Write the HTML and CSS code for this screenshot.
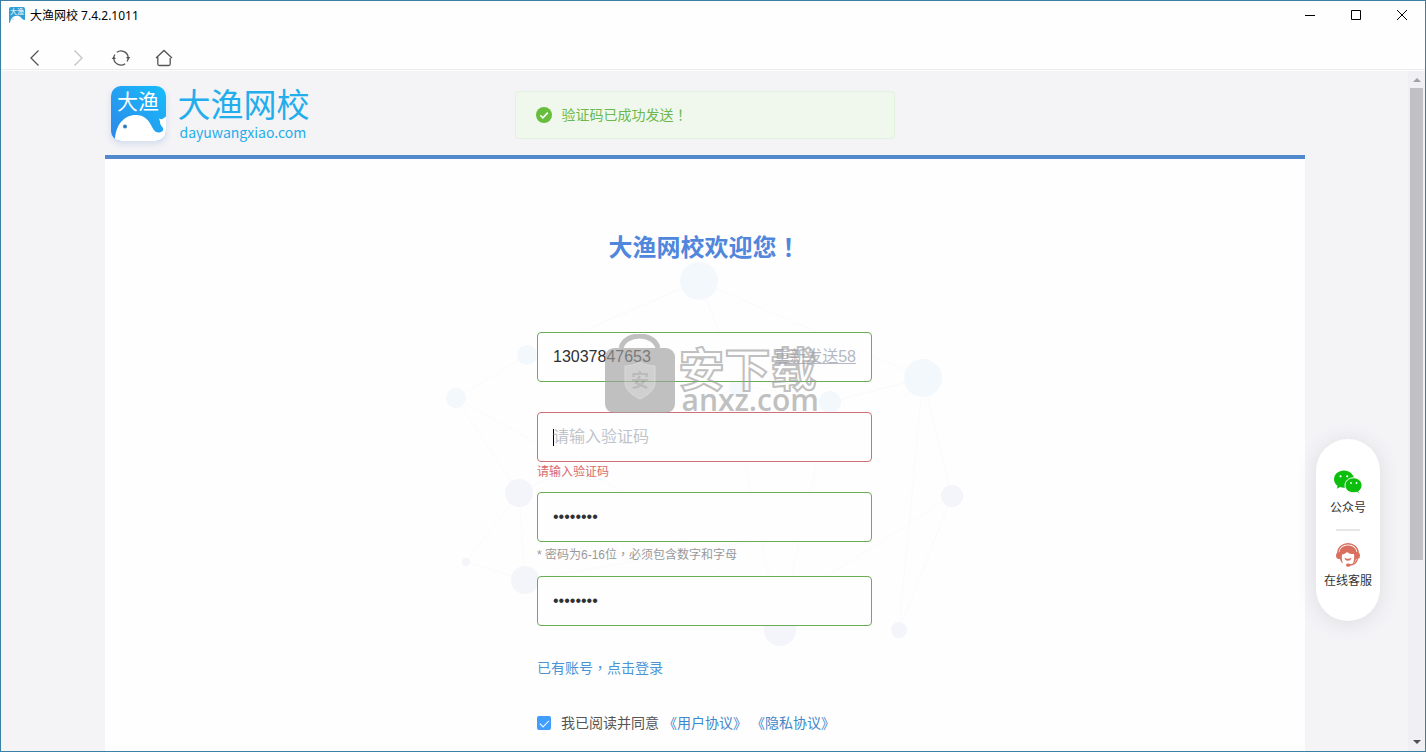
FILE: index.html
```html
<!DOCTYPE html>
<html lang="zh-CN">
<head>
<meta charset="utf-8">
<title>大渔网校 7.4.2.1011</title>
<link rel="stylesheet" href="styles.css">
</head>
<body>
<div class="window">
  <header class="titlebar">
    <svg class="app-icon" viewBox="0 0 16 16" aria-hidden="true">
      <path d="M2 0h12a2 2 0 0 1 2 2v11c-2 0-3-1-4-2.500C10 8 5 8.500 3 11c-1 1-1.500 3-2 4.500L0 16V2a2 2 0 0 1 2-2z" fill="#2f9fd6"/>
      <text x="1" y="7" class="app-icon-text">大渔</text>
      <circle cx="4" cy="12" r=".6" fill="#2f9fd6"/>
    </svg>
    <span class="titlebar-text">大渔网校 7.4.2.1011</span>
    <div class="window-controls">
      <button class="window-button" aria-label="最小化"><svg viewBox="0 0 12 12"><path d="M1 6.500h10"/></svg></button>
      <button class="window-button" aria-label="最大化"><svg viewBox="0 0 12 12"><path d="M1.500 1.500h9v9h-9z"/></svg></button>
      <button class="window-button" aria-label="关闭"><svg viewBox="0 0 12 12"><path d="M1 1l10 10M11 1L1 11"/></svg></button>
    </div>
  </header>

  <nav class="toolbar">
    <button class="tool" aria-label="后退"><svg viewBox="0 0 18 18"><path d="M12.500 1.500L5 9l7.500 7.500"/></svg></button>
    <button class="tool tool-off" aria-label="前进" disabled><svg viewBox="0 0 18 18"><path d="M5.500 1.500L13 9l-7.500 7.500"/></svg></button>
    <button class="tool" aria-label="刷新"><svg viewBox="0 0 18 18"><path d="M4.800 3.300A7.200 7.200 0 0 1 16.200 8.500M13.200 14.700A7.200 7.200 0 0 1 1.800 9.500M1.800 8.500a7 7 0 0 1 1.200-3M16.200 9.500a7 7 0 0 1-1.200 3"/><path class="solid" d="M14 8h4.400l-2.200 2.800zM-.4 10H4L1.800 7.200z"/></svg></button>
    <button class="tool" aria-label="主页"><svg viewBox="0 0 18 18"><path d="M1 9l8-7.500L17 9M2.800 8v7a1.500 1.500 0 0 0 1.500 1.500h9.400a1.500 1.500 0 0 0 1.500-1.500V9"/></svg></button>
  </nav>

  <div class="viewport">
    <main class="page">
      <div class="brand-bar">
        <svg class="brand-mark" viewBox="0 0 55 55" aria-hidden="true">
          <defs>
            <linearGradient id="sky" x1="1" y1="0" x2="0" y2="1"><stop offset="0" stop-color="#16bdfb"/><stop offset="1" stop-color="#2f86e8"/></linearGradient>
            <clipPath id="tile"><rect width="55" height="55" rx="10"/></clipPath>
          </defs>
          <g clip-path="url(#tile)">
            <rect width="55" height="55" fill="url(#sky)"/>
            <path d="M4 55C4 39 13 29 25 29c8 0 12 4.500 15 10 2 4 4 7.500 7.500 7.500 3.500 0 5.500-2.200 4.500-4.500-.7-1.500-2.500-2.500-2.800-4.500-.2-1.500-.2-3-1.200-5 1.500.8 2.500 1 3.500.5l3.500-2.500V55z" fill="#fff"/>
            <circle cx="14" cy="40.500" r="2" fill="#2f7fc0"/>
          </g>
          <text x="6" y="23" class="brand-mark-text">大渔</text>
        </svg>
        <div class="brand-words">
          <span class="brand-name">大渔网校</span>
          <span class="brand-domain">dayuwangxiao.com</span>
        </div>
      </div>

      <div class="toast" role="alert">
        <svg class="toast-icon" viewBox="0 0 16 16" aria-hidden="true"><circle cx="8" cy="8" r="8" fill="#67bd3c"/><path d="M4.300 8.200l2.600 2.600 4.900-5.200" fill="none" stroke="#fff" stroke-width="1.600"/></svg>
        <span>验证码已成功发送<span class="mark" lang="zh-TW">！</span></span>
      </div>

      <section class="panel">
        <svg class="network" viewBox="440 250 530 400" aria-hidden="true">
          <g class="network-lines">
            <path d="M456 398L527 355L699 281L923 378M699 281L740 385L830 402L923 378M456 398L519 493L466 562L525 580L519 493M456 398L620 490L780 630L740 440M923 378L952 496L899 630L923 378M923 378L760 540L525 580M952 496L790 600M830 402L780 630M740 385L519 493"/>
          </g>
          <g fill="#f3f8fd"><circle cx="699" cy="281" r="19"/><circle cx="923" cy="378" r="19"/><circle cx="527" cy="355" r="10"/><circle cx="456" cy="398" r="10"/><circle cx="738" cy="388" r="9"/><circle cx="830" cy="402" r="11"/></g>
          <g fill="#f3f5fa"><circle cx="519" cy="493" r="14"/><circle cx="525" cy="580" r="14"/><circle cx="466" cy="562" r="4"/><circle cx="952" cy="496" r="11"/><circle cx="899" cy="630" r="8"/><circle cx="780" cy="630" r="16"/></g>
        </svg>

        <form class="signup">
          <h1 class="welcome">大渔网校欢迎您<span class="mark" lang="zh-TW">！</span></h1>
          <div class="field">
            <input class="field-input" type="text" aria-label="手机号" value="13037847653">
            <button class="resend" type="button">重新发送58</button>
          </div>
          <div class="field field-error code-field">
            <span class="caret"></span>
            <input class="field-input" type="text" aria-label="验证码" placeholder="请输入验证码">
          </div>
          <p class="error">请输入验证码</p>
          <div class="field">
            <input class="field-input" type="password" aria-label="密码" value="abcd1234">
          </div>
          <p class="hint">* 密码为6-16位<span class="mark" lang="zh-TW">，</span>必须包含数字和字母</p>
          <div class="field">
            <input class="field-input" type="password" aria-label="确认密码" value="abcd1234">
          </div>
          <a class="login-link" href="#">已有账号<span class="mark" lang="zh-TW">，</span>点击登录</a>
          <div class="agreement">
            <input class="agree-box" type="checkbox" id="agree" checked>
            <label class="agree-label" for="agree">我已阅读并同意</label>
            <a href="#">《用户协议》</a>
            <a href="#">《隐私协议》</a>
          </div>
        </form>

        <div class="watermark" aria-hidden="true">
          <svg class="watermark-lock" viewBox="0 0 72 80">
            <path d="M17 14C21-2 50-2 54 14" fill="none" stroke="#a0a0a0" stroke-width="5"/>
            <path d="M10 14h52a9 9 0 0 1 9 9v47a9 9 0 0 1-9 9H10a9 9 0 0 1-9-9V23a9 9 0 0 1 9-9z" fill="#a0a0a0"/>
            <path d="M36 28c5 3 10 4 15 4v16c0 8-7 13-15 17-8-4-15-9-15-17V32c5 0 10-1 15-4z" fill="#b8b8b8" stroke="#c8c8c8"/>
            <text x="27" y="53" class="watermark-seal">安</text>
          </svg>
          <div class="watermark-words">
            <span class="watermark-name">安下载</span>
            <span class="watermark-domain">anxz.com</span>
          </div>
        </div>
      </section>

      <aside class="contact">
        <button class="contact-item">
          <svg class="contact-icon" viewBox="0 0 28 24" aria-hidden="true">
            <path d="M10 .5C4.500.5 0 4.400 0 9.300c0 2.700 1.400 5 3.600 6.600L2.800 18.800l3.300-1.700c1.200.4 2.500.6 3.900.6 5.500 0 10-3.800 10-8.500S15.500.5 10 .5z" fill="#0dbf0d"/>
            <path d="M19.500 7.800c-4.800 0-8.500 3.300-8.500 7.500s3.700 7.500 8.500 7.500c1.100 0 2.200-.2 3.200-.5l2.700 1.500-.7-2.500c2-1.300 3.300-3.500 3.300-6 0-4.200-3.800-7.500-8.500-7.500z" fill="#0dbf0d" stroke="#fff"/>
            <g fill="#fff"><circle cx="6.500" cy="6.300" r="1.100"/><circle cx="13.200" cy="6.300" r="1.100"/><circle cx="17" cy="13" r=".9"/><circle cx="22.500" cy="13" r=".9"/></g>
          </svg>
          <span>公众号</span>
        </button>
        <hr class="contact-rule">
        <button class="contact-item">
          <svg class="contact-icon" viewBox="0 0 28 24" aria-hidden="true">
            <path d="M3.800 10C4 4.500 8.500.8 14 .8S24 4.500 24.200 10" fill="none" stroke="#d9705f" stroke-width="1.400"/>
            <path d="M5.500 9C6 5 9.500 2.500 14 2.500S22 5 22.500 9q3.500 0 3.500 3.500t-3 3.500h-1c-.5 2-1.500 3.500-3 4.500 1-3 1.500-6 1-9.500-3 .3-5.500-.5-7-2-1.500 1.500-3 2.300-5 2.500-.5 3.500 0 6.500 1 9-1.500-1-2.500-2.500-3-4.500H5Q2 16 2 12.500T5.500 9z" fill="#d9705f"/>
            <path d="M23.500 16c-1 3.500-4 5.800-8 6" fill="none" stroke="#d9705f" stroke-width="1.300"/>
            <path d="M10.500 14.800q3.500 2 7 0-.5 3-3.500 3t-3.500-3z" fill="#d9705f"/>
            <rect x="12" y="20.500" width="4.500" height="3.200" rx="1.600" fill="#d9705f"/>
          </svg>
          <span>在线客服</span>
        </button>
      </aside>
    </main>

    <div class="scrollbar">
      <button class="scroll-arrow" aria-label="向上滚动"><svg viewBox="0 0 8 5"><path d="M4 1l4 4H0z" fill="#a0a0a0"/></svg></button>
      <div class="scroll-track"><div class="scroll-thumb"></div></div>
      <button class="scroll-arrow" aria-label="向下滚动"><svg viewBox="0 0 8 5"><path d="M0 0h8L4 4z" fill="#505050"/></svg></button>
    </div>
  </div>
</div>
</body>
</html>
```

FILE: styles.css
```css
* {
  box-sizing: border-box;
}

body {
  margin: 0;
  font-family: "Liberation Sans", "Noto Sans CJK SC", sans-serif;
  font-size: 14px;
}

button {
  padding: 0;
  border: 0;
  background: none;
  font: inherit;
  color: inherit;
}

a {
  color: #3f87cb;
  text-decoration: none;
}

/* Full-width punctuation centred in its box */
.mark {
  font-family: "Noto Sans CJK TC", sans-serif;
  line-height: 1;
}

.window {
  display: flex;
  flex-direction: column;
  height: 100vh;
  overflow: hidden;
  border: 1px solid #3a80a4;
  background: #fefefe;
}

/* Title bar */
.titlebar {
  display: flex;
  align-items: center;
  height: 28px;
  padding-left: 8px;
}

.app-icon {
  width: 16px;
  height: 16px;
}

.app-icon-text {
  font-size: 7px;
  fill: #fff;
}

.titlebar-text {
  margin-left: 5px;
  font-family: "Noto Sans", "Noto Sans CJK SC", sans-serif;
  font-size: 12px;
  color: #000;
}

.window-controls {
  display: flex;
  margin-left: auto;
}

.window-button {
  display: flex;
  align-items: center;
  justify-content: center;
  width: 46px;
  height: 28px;
}

.window-button svg {
  width: 12px;
  height: 12px;
  fill: none;
  stroke: #000;
}

/* Toolbar */
.toolbar {
  display: flex;
  align-items: flex-end;
  gap: 25px;
  height: 41px;
  padding: 0 25px 2px;
  border-bottom: 1px solid #ebeaec;
}

.tool {
  height: 18px;
}

.tool svg {
  display: block;
  width: 18px;
  height: 18px;
  overflow: visible;
  fill: none;
  stroke: #555;
  stroke-width: 1.3;
}

.tool .solid {
  fill: #555;
  stroke: none;
}

.tool-off svg {
  stroke: #c4c4c4;
}

/* Scrolled page */
.viewport {
  display: flex;
  flex: 1;
  min-height: 0;
  margin-top: 1px;
}

.page {
  position: relative;
  flex: 1;
  overflow: hidden;
  background: #f4f3f6;
}

.brand-bar {
  display: flex;
  align-items: center;
  gap: 12px;
  max-width: 1200px;
  height: 84px;
  margin: 0 auto;
  padding-left: 6px;
}

.brand-mark {
  width: 55px;
  height: 55px;
  overflow: visible;
  border-radius: 10px;
  box-shadow: 0 3px 6px #d3dcec;
}

.brand-mark-text {
  font-family: "Noto Sans CJK SC", sans-serif;
  font-size: 21px;
  fill: #fff;
}

.brand-words {
  display: flex;
  flex-direction: column;
  color: #22aeec;
}

.brand-name {
  font-size: 33px;
  line-height: 38px;
}

.brand-domain {
  padding-left: 2px;
  font-family: "Noto Sans CJK SC", sans-serif;
  font-size: 14px;
  line-height: 14px;
}

.toast {
  position: absolute;
  top: 20px;
  left: 50%;
  display: flex;
  align-items: center;
  gap: 10px;
  width: 380px;
  height: 48px;
  padding: 0 20px 1px;
  transform: translateX(-50%);
  border: 1px solid #e3f1df;
  border-radius: 4px;
  background: #f0f8ee;
  line-height: 20px;
  color: #6cb84c;
}

.toast-icon {
  width: 16px;
  height: 16px;
}

.panel {
  position: relative;
  max-width: 1200px;
  min-height: 100%;
  margin: 0 auto;
  border-top: 4px solid #5289cd;
  background: #fefefe;
}

.network {
  position: absolute;
  top: 91px;
  left: 0;
  right: 0;
  width: 530px;
  height: 400px;
  margin: 0 auto;
}

.network-lines {
  fill: none;
  stroke: #f9fafc;
}

/* Sign-up form */
.signup {
  position: relative;
  display: flex;
  flex-direction: column;
  width: 335px;
  margin: 0 auto;
  padding-top: 73px;
}

.welcome {
  margin: 0 0 68px;
  font-size: 24px;
  line-height: 32px;
  text-align: center;
  color: #5086dc;
}

.field {
  display: flex;
  align-items: center;
  height: 50px;
  padding: 0 15px;
  border: 1px solid #6bac54;
  border-radius: 4px;
  background: #fefefe;
  font-size: 16px;
}

.code-field {
  margin-top: 30px;
}

.field-error {
  border-color: #cf7076;
}

.field-input {
  flex: 1;
  min-width: 0;
  padding: 0;
  border: 0;
  outline: 0;
  background: none;
  font: inherit;
  color: #303133;
}

.field-input::placeholder {
  color: #c0c4cc;
}

.caret {
  width: 1px;
  height: 17px;
  margin-right: -1px;
  background: #000;
}

.resend {
  line-height: 16px;
  text-decoration: underline;
  color: #b4b8c4;
}

.error,
.hint {
  font-size: 12px;
  line-height: 20px;
}

.error {
  margin: 0 0 10px;
  color: #d96b6b;
}

.hint {
  margin: 3px 0 11px;
  color: #999;
}

.login-link {
  margin: 32px 0 35px;
  line-height: 20px;
  color: #4a94d6;
}

.agreement {
  display: flex;
  align-items: center;
  gap: 4px;
  line-height: 20px;
  color: #555;
}

.agree-box {
  display: grid;
  place-items: center;
  width: 14px;
  height: 14px;
  margin: 0 6px 0 0;
  appearance: none;
  border-radius: 2px;
  background: #409eff;
}

.agree-box:checked::before {
  content: "";
  width: 8px;
  height: 4px;
  margin-bottom: 2px;
  transform: rotate(-45deg);
  border-left: 1px solid #fff;
  border-bottom: 1px solid #fff;
}

/* Watermark over the form */
.watermark {
  position: absolute;
  top: 175px;
  left: 50%;
  display: flex;
  gap: 3px;
  margin-left: -101px;
  pointer-events: none;
  opacity: 0.65;
}

.watermark-lock {
  width: 72px;
  height: 80px;
}

.watermark-seal {
  font-size: 18px;
  font-weight: bold;
  fill: #989898;
}

.watermark-words {
  display: flex;
  flex-direction: column;
  padding-top: 14px;
}

.watermark-name {
  font-size: 46px;
  font-weight: bold;
  line-height: 44px;
  color: transparent;
  -webkit-text-stroke: 2px #a0a0a0;
}

.watermark-domain {
  padding-left: 3px;
  font-family: "Open Sans", "Noto Sans", sans-serif;
  font-size: 30px;
  font-weight: 600;
  line-height: 16px;
  color: #a0a0a0;
}

/* Floating contact card */
.contact {
  position: absolute;
  top: 368px;
  right: 28px;
  display: flex;
  flex-direction: column;
  align-items: center;
  gap: 12px;
  width: 64px;
  padding: 31px 0;
  border-radius: 32px;
  background: #fff;
  box-shadow: 0 2px 20px #dddce0;
}

.contact-item {
  display: flex;
  flex-direction: column;
  align-items: center;
  gap: 5px;
  font-size: 12px;
  line-height: 18px;
  color: #333;
}

.contact-icon {
  width: 28px;
  height: 24px;
}

.contact-rule {
  width: 24px;
  height: 2px;
  margin: 0;
  border: 0;
  background: #e6e6e6;
}

/* Scroll bar */
.scrollbar {
  display: flex;
  flex-direction: column;
  width: 17px;
  background: #f0eff3;
}

.scroll-arrow {
  display: flex;
  align-items: center;
  justify-content: center;
  height: 17px;
}

.scroll-arrow svg {
  width: 8px;
  height: 5px;
}

.scroll-track {
  flex: 1;
  padding: 0 2px;
}

.scroll-thumb {
  height: 73%;
  background: #c1c0c4;
}
```
